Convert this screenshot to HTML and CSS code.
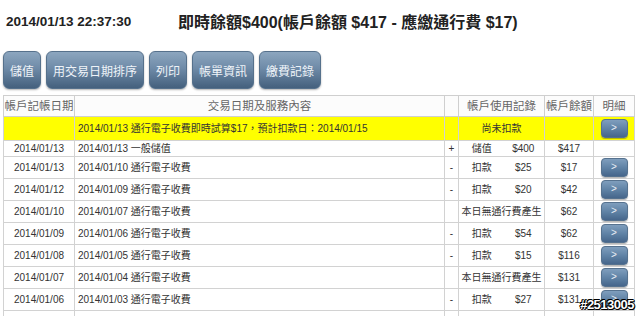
FILE: index.html
```html
<!DOCTYPE html>
<html>
    <head>
        <title>帳戶使用記錄</title>
        <link rel="stylesheet" href="styles.css">
    </head>
    <body>
        <div class="top-bar">
            <span class="now">2014/01/13 22:37:30</span>
            <span class="balance-title">即時餘額$400(帳戶餘額 $417 - 應繳通行費 $17)</span>
        </div>

        <div class="tool-bar">
            <button class="tool-btn">儲值</button>
            <button class="tool-btn">用交易日期排序</button>
            <button class="tool-btn">列印</button>
            <button class="tool-btn">帳單資訊</button>
            <button class="tool-btn">繳費記錄</button>
        </div>

        <table class="record-table">
            <colgroup>
                <col class="c-date">
                <col class="c-desc">
                <col class="c-sign">
                <col class="c-rec">
                <col class="c-bal">
                <col class="c-more">
            </colgroup>
            <thead>
                <tr>
                    <th>帳戶記帳日期</th>
                    <th>交易日期及服務內容</th>
                    <th></th>
                    <th>帳戶使用記錄</th>
                    <th>帳戶餘額</th>
                    <th>明細</th>
                </tr>
            </thead>
            <tbody>
                <tr class="pending">
                    <td></td>
                    <td class="desc">2014/01/13 通行電子收費即時試算$17，預計扣款日：2014/01/15</td>
                    <td></td>
                    <td>尚未扣款</td>
                    <td></td>
                    <td><span class="more-btn">&gt;</span></td>
                </tr>
                <tr class="plain">
                    <td>2014/01/13</td>
                    <td class="desc">2014/01/13 一般儲值</td>
                    <td>+</td>
                    <td><span class="rec"><span>儲值</span><span>$400</span></span></td>
                    <td>$417</td>
                    <td></td>
                </tr>
                <tr>
                    <td>2014/01/13</td>
                    <td class="desc">2014/01/10 通行電子收費</td>
                    <td>-</td>
                    <td><span class="rec"><span>扣款</span><span>$25</span></span></td>
                    <td>$17</td>
                    <td><span class="more-btn">&gt;</span></td>
                </tr>
                <tr>
                    <td>2014/01/12</td>
                    <td class="desc">2014/01/09 通行電子收費</td>
                    <td>-</td>
                    <td><span class="rec"><span>扣款</span><span>$20</span></span></td>
                    <td>$42</td>
                    <td><span class="more-btn">&gt;</span></td>
                </tr>
                <tr>
                    <td>2014/01/10</td>
                    <td class="desc">2014/01/07 通行電子收費</td>
                    <td></td>
                    <td>本日無通行費產生</td>
                    <td>$62</td>
                    <td><span class="more-btn">&gt;</span></td>
                </tr>
                <tr>
                    <td>2014/01/09</td>
                    <td class="desc">2014/01/06 通行電子收費</td>
                    <td>-</td>
                    <td><span class="rec"><span>扣款</span><span>$54</span></span></td>
                    <td>$62</td>
                    <td><span class="more-btn">&gt;</span></td>
                </tr>
                <tr>
                    <td>2014/01/08</td>
                    <td class="desc">2014/01/05 通行電子收費</td>
                    <td>-</td>
                    <td><span class="rec"><span>扣款</span><span>$15</span></span></td>
                    <td>$116</td>
                    <td><span class="more-btn">&gt;</span></td>
                </tr>
                <tr>
                    <td>2014/01/07</td>
                    <td class="desc">2014/01/04 通行電子收費</td>
                    <td></td>
                    <td>本日無通行費產生</td>
                    <td>$131</td>
                    <td><span class="more-btn">&gt;</span></td>
                </tr>
                <tr>
                    <td>2014/01/06</td>
                    <td class="desc">2014/01/03 通行電子收費</td>
                    <td>-</td>
                    <td><span class="rec"><span>扣款</span><span>$27</span></span></td>
                    <td>$131</td>
                    <td><span class="more-btn">&gt;</span></td>
                </tr>
                <tr>
                    <td></td>
                    <td></td>
                    <td></td>
                    <td></td>
                    <td></td>
                    <td></td>
                </tr>
            </tbody>
        </table>

        <div class="stamp">#2513005</div>
    </body>
</html>
```

FILE: styles.css
```css
body{
    margin: 0;
    padding: 0 3px;
    background: #fff;
    font-family: "Liberation Sans", "Noto Sans CJK TC", sans-serif;
    color: #333;
    overflow: hidden;
}

.top-bar{
    display: flex;
    align-items: center;
    height: 42px;
    padding-left: 3px;
    color: #222;
    font-weight: bold;
}

.now{
    font-size: 13.5px;
    width: 172px;
}

.balance-title{
    font-size: 16px;
}

.tool-bar{
    display: flex;
    gap: 5px;
    margin-top: 9px;
    height: 38px;
}

.tool-btn{
    height: 38px;
    padding: 0 6px;
    font-family: "Liberation Sans", "Noto Sans CJK TC", sans-serif;
    font-size: 12px;
    color: #eef3f8;
    border: 1px solid #56718c;
    border-radius: 6px;
    background: linear-gradient(#8ca6bf, #6f8ba8 45%, #44607d);
    box-shadow: 0 1px 2px rgba(0,0,0,0.3);
}

.record-table{
    margin-top: 6px;
    width: 631px;
    table-layout: fixed;
    border-collapse: collapse;
    border: 1px solid #b8b8b8;
    font-size: 10px;
}

.c-date{ width: 71px; }
.c-desc{ width: 370px; }
.c-sign{ width: 14px; }
.c-rec{ width: 86px; }
.c-bal{ width: 49px; }
.c-more{ width: 41px; }

.record-table th{
    height: 20px;
    padding: 0;
    font-size: 11.5px;
    font-weight: normal;
    color: #666;
    background: #fcfcfc;
    border: 1px solid #cfcfcf;
    line-height: 14px;
}

.record-table td{
    height: 21px;
    padding: 0;
    text-align: center;
    white-space: nowrap;
    border: 1px solid #d2d2d2;
    line-height: 13px;
}

.record-table td.desc{
    text-align: left;
    padding-left: 3px;
}

.pending td{
    height: 23px;
    background: #ffff00;
}

.plain td{
    height: 15px;
}

.rec{
    display: flex;
}

.rec span{
    flex: 1;
}

.rec span:first-child{
    padding-left: 2px;
}

.more-btn{
    display: inline-block;
    width: 25px;
    height: 17px;
    line-height: 16px;
    font-size: 10px;
    color: #e8eef5;
    border: 1px solid #56728f;
    border-radius: 4px;
    background: linear-gradient(#7f9ebd, #6083a6 50%, #46668b);
    box-shadow: 0 1px 1px rgba(0,0,0,0.3);
    vertical-align: middle;
}

.stamp{
    position: absolute;
    right: 6px;
    top: 297px;
    font-size: 13px;
    font-weight: bold;
    color: #fff;
    letter-spacing: -0.5px;
    text-shadow: -1px 0 #000, 1px 0 #000, 0 -1px #000, 0 1px #000, 1px 1px #000, -1px -1px #000;
}
```
